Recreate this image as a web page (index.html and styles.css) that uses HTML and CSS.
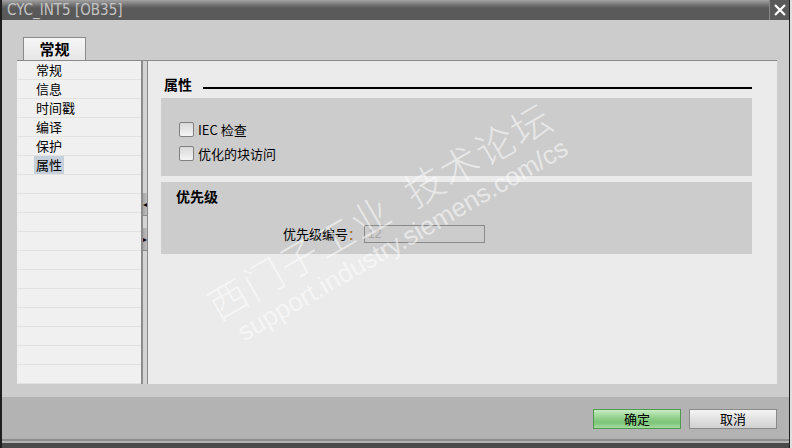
FILE: index.html
```html
<!DOCTYPE html>
<html>
<head>
  <title>CYC_INT5 [OB35]</title>
  <link rel="stylesheet" href="styles.css">
</head>
<body>
  <div class="window">
    <div class="titlebar">
      <span class="title">CYC_INT5 [OB35]</span>
      <span class="close">
        <svg width="12" height="12" viewBox="0 0 12 12"><path d="M1 1 L11 11 M11 1 L1 11" stroke="#fff" stroke-width="2.2"/></svg>
      </span>
    </div>

    <div class="main">
      <div class="tabs">
        <div class="tab">常规</div>
      </div>

      <div class="frame">
        <div class="nav">
          <div class="nav-item"><span>常规</span></div>
          <div class="nav-item"><span>信息</span></div>
          <div class="nav-item"><span>时间戳</span></div>
          <div class="nav-item"><span>编译</span></div>
          <div class="nav-item"><span>保护</span></div>
          <div class="nav-item selected"><span>属性</span></div>
          <div class="nav-item"></div>
          <div class="nav-item"></div>
          <div class="nav-item"></div>
          <div class="nav-item"></div>
          <div class="nav-item"></div>
          <div class="nav-item"></div>
          <div class="nav-item"></div>
          <div class="nav-item"></div>
          <div class="nav-item"></div>
          <div class="nav-item"></div>
          <div class="nav-item"></div>
        </div>

        <div class="splitter">
          <div class="split-btn">&#9666;</div>
          <div class="split-btn">&#9656;</div>
        </div>

        <div class="panel">
          <div class="heading">
            <span>属性</span>
            <div class="heading-line"></div>
          </div>

          <div class="group group-checks">
            <label class="check"><span class="box"></span>IEC 检查</label>
            <label class="check"><span class="box"></span>优化的块访问</label>
          </div>

          <div class="group group-prio">
            <div class="group-title">优先级</div>
            <div class="field">
              <span class="field-label">优先级编号<span class="colon">：</span></span>
              <span class="field-input">12</span>
            </div>
          </div>
        </div>
      </div>
    </div>

    <div class="buttonbar">
      <button class="btn btn-ok">确定</button>
      <button class="btn">取消</button>
    </div>
    <div class="bottom"></div>

    <div class="watermark">
      <div class="wm-cn">西门子工业&nbsp;&nbsp;技术论坛</div>
      <div class="wm-en">support.industry.siemens.com/cs</div>
    </div>
  </div>
</body>
</html>
```

FILE: styles.css
```css
body {
  margin: 0;
  background-color: #e0e0e0;
  font-family: "Noto Sans CJK SC", "Liberation Sans", sans-serif;
  font-size: 13px;
  color: #000;
}

.window {
  position: relative;
  width: 787px;
  height: 448px;
  border-left: 2px solid #1e1e1e;
  border-right: 1px solid #1e1e1e;
  display: flex;
  flex-direction: column;
  background-color: #cccccc;
  overflow: hidden;
}

.titlebar {
  height: 20px;
  flex: none;
  display: flex;
  align-items: center;
  background: linear-gradient(#a2a2a2 0px, #6a6a6a 6px, #5a5a5a 8px, #595959 20px);
}

.title {
  flex: 1;
  padding-left: 5px;
  font-family: "DejaVu Sans Condensed", "Liberation Sans", sans-serif;
  font-size: 15px;
  color: #c4c4c4;
  line-height: 20px;
}

.close {
  width: 19px;
  height: 20px;
  border-left: 1px solid #8a8a8a;
  display: flex;
  align-items: center;
  justify-content: center;
  background-color: #5a5a5a;
}

.main {
  flex: 1;
  display: flex;
  flex-direction: column;
  padding: 17px 12px 13px 15px;
}

.tabs {
  height: 23px;
  display: flex;
  padding-left: 6px;
}

.tab {
  width: 61px;
  height: 22px;
  border: 1px solid #8a8a8a;
  border-bottom: none;
  background: linear-gradient(#f6f6f6, #e6e6e6);
  font-weight: bold;
  font-size: 15px;
  line-height: 22px;
  text-align: center;
}

.frame {
  flex: 1;
  display: flex;
  border-top: 1px solid #8a8a8a;
}

.nav {
  width: 124px;
  background-color: #f0f0f0;
  overflow: hidden;
}

.nav-item {
  height: 18px;
  border-bottom: 1px solid #e2e2e2;
  padding-left: 17px;
  line-height: 18px;
}

.nav-item span {
  display: inline-block;
  padding: 0 2px;
}

.nav-item.selected span {
  background-color: #c6d0da;
}

.splitter {
  width: 4px;
  border-left: 2px solid #8c8c8c;
  border-right: 1px solid #8c8c8c;
  background-color: #d4d4d4;
  padding-top: 132px;
  display: flex;
  flex-direction: column;
  gap: 12px;
}

.split-btn {
  height: 22px;
  background: linear-gradient(90deg, #a8a8a8, #bdbdbd);
  border-bottom: 1px solid #8c8c8c;
  font-size: 8px;
  line-height: 22px;
  text-align: center;
  color: #000;
  overflow: hidden;
}

.panel {
  flex: 1;
  background-color: #ebebeb;
  padding: 12px 25px 0 13px;
}

.heading {
  height: 22px;
  display: flex;
  align-items: center;
  padding-left: 3px;
  margin-bottom: 3px;
  font-weight: bold;
  font-size: 14px;
}

.heading-line {
  flex: 1;
  margin-left: 11px;
  margin-top: 7px;
  border-top: 2px solid #000;
}

.group {
  background-color: #cccccc;
}

.group-checks {
  height: 78px;
  padding: 23px 0 0 18px;
  box-sizing: border-box;
  display: flex;
  flex-direction: column;
  gap: 8px;
}

.check {
  display: flex;
  align-items: center;
  height: 16px;
}

.box {
  width: 13px;
  height: 13px;
  margin-right: 4px;
  border: 1px solid #808080;
  border-radius: 2px;
  background: linear-gradient(#d8d8d8, #f4f4f4);
}

.group-prio {
  height: 72px;
  margin-top: 6px;
  padding: 5px 0 0 15px;
  box-sizing: border-box;
}

.group-title {
  font-weight: bold;
  font-size: 14px;
  line-height: 18px;
}

.field {
  display: flex;
  align-items: center;
  margin-top: 19px;
  padding-left: 107px;
}

.field-label {
  flex: none;
  white-space: nowrap;
}

.colon {
  color: #a06428;
}

.field-input {
  width: 116px;
  height: 16px;
  margin-left: 3px;
  border: 1px solid #8a8a8a;
  padding-left: 3px;
  line-height: 16px;
  color: #a6a6a6;
  font-family: "Liberation Sans", sans-serif;
  font-size: 12px;
}

.buttonbar {
  height: 42px;
  flex: none;
  display: flex;
  justify-content: flex-end;
  align-items: center;
  gap: 8px;
  padding-right: 12px;
  padding-top: 1px;
  box-sizing: border-box;
  background-color: #b3b3b3;
}

.btn {
  width: 88px;
  height: 20px;
  border: 1px solid #8a8a8a;
  background: linear-gradient(#f4f4f4, #e2e2e2 50%, #d0d0d0);
  font-family: "Noto Sans CJK SC", sans-serif;
  font-size: 13px;
  line-height: 16px;
  padding: 0;
}

.btn-ok {
  border-color: #4f9a4f;
  background: linear-gradient(#c8ecc4, #8fd08a 45%, #7cc478 70%, #a6dca0);
}

.bottom {
  height: 9px;
  flex: none;
  border-top: 2px solid #8c8c8c;
  border-bottom: 5px solid #4a4a4a;
  box-sizing: border-box;
  background-color: #b3b3b3;
}

.watermark {
  position: absolute;
  left: 234px;
  top: 276px;
  transform-origin: 0 100%;
  transform: rotate(-30deg);
  color: rgba(255, 255, 255, 0.55);
  pointer-events: none;
  white-space: nowrap;
}

.wm-cn {
  font-size: 39px;
  line-height: 48px;
  font-weight: 300;
  letter-spacing: 2px;
}

.wm-en {
  font-family: "Liberation Sans", sans-serif;
  font-size: 26px;
  line-height: 28px;
  padding-left: 12px;
}
```
